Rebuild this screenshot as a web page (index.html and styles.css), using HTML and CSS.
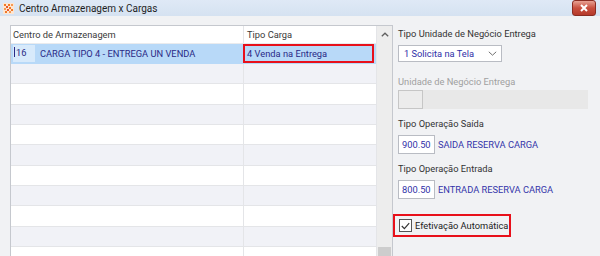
FILE: index.html
```html
<!DOCTYPE html>
<html lang="pt">
<head>
  <meta charset="UTF-8">
  <title>Centro Armazenagem x Cargas</title>
  <link rel="stylesheet" href="styles.css">
</head>
<body>
  <div class="window">
    <div class="titlebar">
      <svg class="app-icon" width="11" height="11" viewBox="0 0 11 11">
        <rect width="11" height="11" fill="#fde6d2"/>
        <rect x="1" y="1" width="2" height="2" fill="#f07a2a"/>
        <rect x="5" y="1" width="2" height="2" fill="#f07a2a"/>
        <rect x="8" y="1" width="2" height="2" fill="#f59a55"/>
        <rect x="3" y="3" width="2" height="2" fill="#e8562a"/>
        <rect x="6" y="4" width="2" height="2" fill="#f07a2a"/>
        <rect x="1" y="5" width="2" height="2" fill="#f59a55"/>
        <rect x="4" y="6" width="2" height="2" fill="#e8562a"/>
        <rect x="8" y="6" width="2" height="2" fill="#f07a2a"/>
        <rect x="2" y="8" width="2" height="2" fill="#f07a2a"/>
        <rect x="6" y="8" width="2" height="2" fill="#f59a55"/>
      </svg>
      <span class="title">Centro Armazenagem x Cargas</span>
      <div class="close">
        <svg width="10" height="8" viewBox="0 0 10 8"><path d="M2 1 L8 7 M8 1 L2 7" stroke="#fff" stroke-width="2"/></svg>
      </div>
    </div>
    <div class="content">
      <div class="grid">
        <div class="table">
          <div class="row head">
            <div class="cell c1">Centro de Armazenagem</div>
            <div class="cell c2">Tipo Carga</div>
          </div>
          <div class="row selected">
            <div class="cell c1"><span class="edit"><i class="caret"></i>16</span>CARGA TIPO 4 - ENTREGA UN VENDA</div>
            <div class="cell c2 mark">4 Venda na Entrega</div>
          </div>
          <div class="row"><div class="cell c1"></div><div class="cell c2"></div></div>
          <div class="row"><div class="cell c1"></div><div class="cell c2"></div></div>
          <div class="row"><div class="cell c1"></div><div class="cell c2"></div></div>
          <div class="row"><div class="cell c1"></div><div class="cell c2"></div></div>
          <div class="row"><div class="cell c1"></div><div class="cell c2"></div></div>
          <div class="row"><div class="cell c1"></div><div class="cell c2"></div></div>
          <div class="row"><div class="cell c1"></div><div class="cell c2"></div></div>
          <div class="row"><div class="cell c1"></div><div class="cell c2"></div></div>
          <div class="row"><div class="cell c1"></div><div class="cell c2"></div></div>
          <div class="row"><div class="cell c1"></div><div class="cell c2"></div></div>
        </div>
        <div class="scrollbar">
          <svg class="arrow" width="8" height="5" viewBox="0 0 8 5"><path d="M0.8 4.2 L4 1.2 L7.2 4.2" fill="none" stroke="#606060" stroke-width="1.3"/></svg>
          <div class="thumb"></div>
        </div>
      </div>
      <div class="panel">
        <div class="label first">Tipo Unidade de Negócio Entrega</div>
        <div class="combo">
          <span>1 Solicita na Tela</span>
          <svg width="9" height="5" viewBox="0 0 9 5"><path d="M0.8 0.8 L4.5 4.2 L8.2 0.8" fill="none" stroke="#707070" stroke-width="1"/></svg>
        </div>
        <div class="label disabled">Unidade de Negócio Entrega</div>
        <div class="lookup">
          <div class="code-box off"></div>
          <div class="desc-off"></div>
        </div>
        <div class="label">Tipo Operação Saída</div>
        <div class="lookup">
          <div class="code-box">900.50</div>
          <span class="desc">SAIDA RESERVA CARGA</span>
        </div>
        <div class="label">Tipo Operação Entrada</div>
        <div class="lookup">
          <div class="code-box">800.50</div>
          <span class="desc">ENTRADA RESERVA CARGA</span>
        </div>
        <label class="check">
          <span class="box">
            <svg width="9" height="8" viewBox="0 0 9 8"><path d="M0.8 4 L3.4 6.6 L8.2 1.2" fill="none" stroke="#333" stroke-width="1.2"/></svg>
          </span>
          Efetivação Automática
        </label>
      </div>
    </div>
  </div>
</body>
</html>
```

FILE: styles.css
```css
*{margin:0;padding:0;box-sizing:border-box;}
html, body{width:600px;height:256px;overflow:hidden;}
body{font-family:Roboto, "Liberation Sans", sans-serif;font-size:9.3px;color:#333;background:#f1f2f4;}
.window{display:flex;flex-direction:column;height:256px;}

.titlebar{display:flex;align-items:center;height:18px;padding-left:3px;background:linear-gradient(#dfe9f6, #d5e2f1);}
.app-icon{margin-right:5px;}
.title{font-size:10px;color:#1e1e1e;flex:1;}
.close{display:flex;align-items:center;justify-content:center;width:24px;height:16px;margin-right:4px;border:1px solid #8a2c22;border-radius:3px;background:linear-gradient(#e8a294, #c9503f 50%, #b5392a);}

.content{display:flex;flex:1;padding:9px 0 0 10px;}
.grid{display:flex;width:383px;border:1px solid #c5c8ce;border-bottom:0;background:#fff;}
.table{flex:1;}
.row{display:flex;height:20.33px;border-bottom:1px solid #e4e5e8;}
.row:nth-child(odd){background:#f1f2f7;}
.row.head{height:18px;background:#fff;border-bottom:1px solid #eaebed;}
.cell{display:flex;align-items:center;padding-left:2px;white-space:nowrap;}
.c1{width:233px;border-right:1px solid #e4e5e8;}
.c2{flex:1;padding-left:3px;}
.head .cell{color:#3a3a3a;}

.row.selected{height:20px;background:#b8d9f8;border-bottom-color:#b8d9f8;}
.selected .cell{color:#2a2a86;}
.selected .c1{border-right-color:#b8d9f8;}
.edit{display:flex;align-items:flex-start;align-self:stretch;width:22px;margin:1px 5px 1px 0;padding-top:2px;background:#d8eafb;}
.caret{display:inline-block;width:1px;height:10px;margin:0 1px 0 1px;background:#2a2a86;}
.mark{border:2px solid #e8101a;margin:0 2px 0 -1px;padding-left:2px;}

.scrollbar{position:relative;width:16px;background:#ededed;border-left:1px solid #e4e5e8;}
.arrow{display:block;margin:6px auto 0;}
.thumb{position:absolute;left:1px;right:1px;top:221px;height:20px;background:#cdcdcd;}

.panel{display:flex;flex-direction:column;padding:3px 0 0 5px;}
.label{height:12px;line-height:12px;color:#333;white-space:nowrap;}
.label.first{margin-top:0;}
.label.disabled{margin-top:14px;color:#a0a0a0;}
.combo{display:flex;align-items:center;justify-content:space-between;width:104px;height:17px;margin-top:5px;padding:0 4px 0 5px;border:1px solid #b9bcc3;background:#fff;color:#3030a8;}
.lookup{display:flex;align-items:center;height:19px;margin-top:4px;}
.label.disabled + .lookup{margin-top:2px;}
.lookup + .label{margin-top:9px;}
.lookup + .label + .lookup{margin-top:5px;}
.code-box{width:37px;height:19px;padding-left:3px;line-height:17px;border:1px solid #b9bcc3;background:#fff;color:#3030a8;}
.code-box.off{width:25px;background:#ececec;border-color:#c6c6c6;}
.desc-off{width:165px;height:19px;background:#e8e8e8;}
.desc{margin-left:3px;color:#3535aa;white-space:nowrap;}
.check{display:flex;align-items:center;gap:3px;width:118px;height:23px;margin:15px 0 0 -5px;padding-left:4px;border:2px solid #e8101a;color:#222;white-space:nowrap;}
.check .box{display:flex;align-items:center;justify-content:center;width:13px;height:13px;border:1px solid #555;background:#fff;}
```
